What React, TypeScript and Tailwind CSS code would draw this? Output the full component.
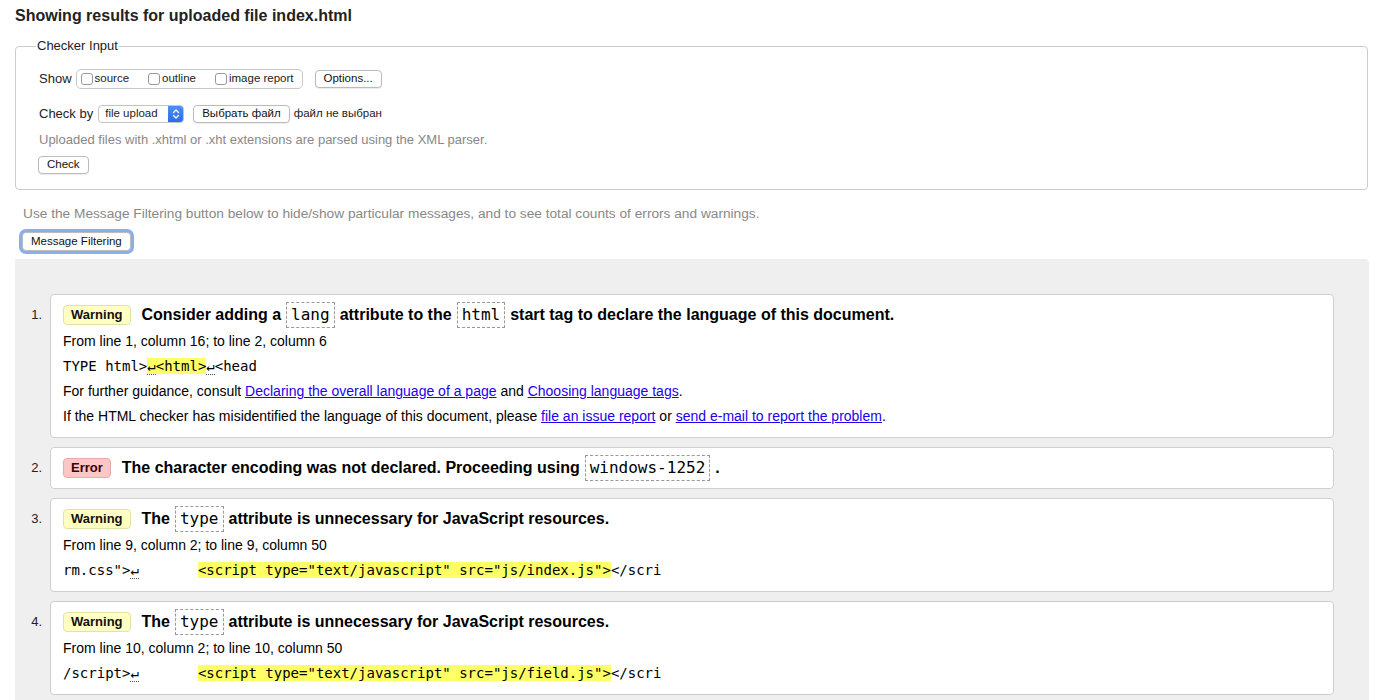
import React from 'react';

const mono = "font-['DejaVu_Sans_Mono',monospace]";

function Code({ children }: { children: React.ReactNode }) {
  return (
    <code className={`${mono} inline-block border border-dashed border-[#999] px-[4px] text-[16px] font-normal leading-[24px] mx-[5px]`}>
      {children}
    </code>
  );
}

function Badge({ kind }: { kind: 'Warning' | 'Error' }) {
  const cls =
    kind === 'Warning'
      ? 'bg-[#ffffc4] border-[#e2e2a8] text-[#111]'
      : 'bg-[#fcc6c6] border-[#eaaaaa] text-[#3a0000]';
  return (
    <span className={`${cls} inline-flex items-center h-[20px] px-[7px] border rounded-[4px] text-[13px] font-bold mr-[11px]`}>
      {kind}
    </span>
  );
}

function Ret() {
  return <span className="border-b border-dotted border-[#555]">↵</span>;
}

function Link({ children }: { children: React.ReactNode }) {
  return <a className="text-[#2200ee] underline">{children}</a>;
}

function Button({ children, className = '' }: { children: React.ReactNode; className?: string }) {
  return (
    <button className={`h-[18px] px-[8px] bg-white border border-[#bbb] rounded-[4px] shadow-[0_1px_1px_rgba(0,0,0,0.08)] text-[11.5px] leading-none text-[#111] ${className}`}>
      {children}
    </button>
  );
}

function Checkbox({ label }: { label: string }) {
  return (
    <label className="flex items-center">
      <span className="w-[12px] h-[12px] bg-white border border-[#999] rounded-[3px] mr-[2px]" />
      <span>{label}</span>
    </label>
  );
}

function Message({
  n,
  kind,
  title,
  lines,
}: {
  n: number;
  kind: 'Warning' | 'Error';
  title: React.ReactNode;
  lines?: React.ReactNode[];
}) {
  return (
    <li className="flex">
      <span className="w-[35px] shrink-0 h-[24px] mt-[9px] flex items-center justify-end pr-[8px] text-[13px] text-[#222]">{n}.</span>
      <div className="flex-1 bg-white border border-[#cfcfcf] rounded-[4px] px-[12px] py-[8px]">
        <div className="flex items-center h-[24px] text-[16px] font-bold text-black whitespace-nowrap">
          <Badge kind={kind} />
          {title}
        </div>
        {lines && (
          <div className="mt-[2px]">
            {lines.map((l, i) => (
              <div key={i} className="leading-[25px] text-[14px] text-black">
                {l}
              </div>
            ))}
          </div>
        )}
      </div>
    </li>
  );
}

export default function App() {
  return (
    <div className="min-h-[700px] bg-white pl-[15px] pr-[12px] font-['Liberation_Sans',Arial,sans-serif] text-black">
      <h1 className="pt-[6px] text-[16px] leading-[20px] font-bold text-[#222]">
        Showing results for uploaded file index.html
      </h1>

      <fieldset className="mt-[12px] mr-[1px] border border-[#ccc] rounded-[4px] px-[20px] pt-[15px] pb-[15px]">
        <legend className="px-[1px] text-[13px] leading-[16px] text-[#222]">Checker Input</legend>
        <div className="pl-[3px] text-[13px] text-[#222]">
          <div className="flex items-center h-[20px]">
            <span className="mr-[4px]">Show</span>
            <div className="flex items-center h-[20px] border border-[#c8c8c8] rounded-[5px] pl-[4px] pr-[8px] gap-[19px] text-[11.5px]">
              <Checkbox label="source" />
              <Checkbox label="outline" />
              <Checkbox label="image report" />
            </div>
            <Button className="ml-[12px] px-[8px]">Options...</Button>
          </div>

          <div className="flex items-center h-[19px] mt-[15px]">
            <span className="mr-[5px]">Check by</span>
            <div className="flex items-stretch h-[18px] border border-[#c4c4c4] rounded-[4px] bg-white w-[86px] overflow-hidden">
              <span className="flex-1 flex items-center pl-[6px] text-[11.5px]">file upload</span>
              <span className="w-[15px] bg-gradient-to-b from-[#4a8ff8] to-[#2b6de8] flex items-center justify-center">
                <svg width="8" height="12" viewBox="0 0 8 12" fill="none" stroke="white" strokeWidth="1.4" strokeLinecap="round" strokeLinejoin="round">
                  <path d="M1.5 4.5 L4 2 L6.5 4.5" />
                  <path d="M1.5 7.5 L4 10 L6.5 7.5" />
                </svg>
              </span>
            </div>
            <Button className="ml-[9px] px-[7px]">Выбрать файл</Button>
            <span className="ml-[4px] text-[11.5px]">файл не выбран</span>
          </div>

          <p className="mt-[8px] leading-[18px] text-[#888]">
            Uploaded files with .xhtml or .xht extensions are parsed using the XML parser.
          </p>

          <Button className="mt-[7px] -ml-[1px] px-[8px]">Check</Button>
        </div>
      </fieldset>

      <p className="mt-[16px] ml-[8px] text-[13.7px] leading-[16px] text-[#888]">
        Use the Message Filtering button below to hide/show particular messages, and to see total counts of errors and warnings.
      </p>
      <div className="mt-[10px] ml-[7px] h-[19px] flex items-center">
        <Button className="h-[19px] ring-[3px] ring-[#86aef0]">Message Filtering</Button>
      </div>

      <div className="mt-[8px] bg-[#efefef] rounded-tr-[4px] pl-0 pr-[35px] pt-[35px] pb-[10px]">
        <ol className="flex flex-col gap-[9px]">
          <Message
            n={1}
            kind="Warning"
            title={
              <>
                Consider adding a<Code>lang</Code>attribute to the<Code>html</Code>start tag to declare the language of this document.
              </>
            }
            lines={[
              'From line 1, column 16; to line 2, column 6',
              <span className={`${mono} whitespace-pre`}>
                TYPE html&gt;
                <span className="bg-[#ffff66]">
                  <Ret />&lt;html&gt;
                </span>
                <Ret />&lt;head
              </span>,
              <>
                For further guidance, consult <Link>Declaring the overall language of a page</Link> and{' '}
                <Link>Choosing language tags</Link>.
              </>,
              <>
                If the HTML checker has misidentified the language of this document, please <Link>file an issue report</Link> or{' '}
                <Link>send e-mail to report the problem</Link>.
              </>,
            ]}
          />
          <Message
            n={2}
            kind="Error"
            title={
              <>
                The character encoding was not declared. Proceeding using<Code>windows-1252</Code>.
              </>
            }
          />
          <Message
            n={3}
            kind="Warning"
            title={
              <>
                The<Code>type</Code>attribute is unnecessary for JavaScript resources.
              </>
            }
            lines={[
              'From line 9, column 2; to line 9, column 50',
              <span className={`${mono} whitespace-pre`}>
                rm.css"&gt;<Ret />{'       '}
                <span className="bg-[#ffff66]">&lt;script type="text/javascript" src="js/index.js"&gt;</span>&lt;/scri
              </span>,
            ]}
          />
          <Message
            n={4}
            kind="Warning"
            title={
              <>
                The<Code>type</Code>attribute is unnecessary for JavaScript resources.
              </>
            }
            lines={[
              'From line 10, column 2; to line 10, column 50',
              <span className={`${mono} whitespace-pre`}>
                /script&gt;<Ret />{'       '}
                <span className="bg-[#ffff66]">&lt;script type="text/javascript" src="js/field.js"&gt;</span>&lt;/scri
              </span>,
            ]}
          />
        </ol>
      </div>
    </div>
  );
}
